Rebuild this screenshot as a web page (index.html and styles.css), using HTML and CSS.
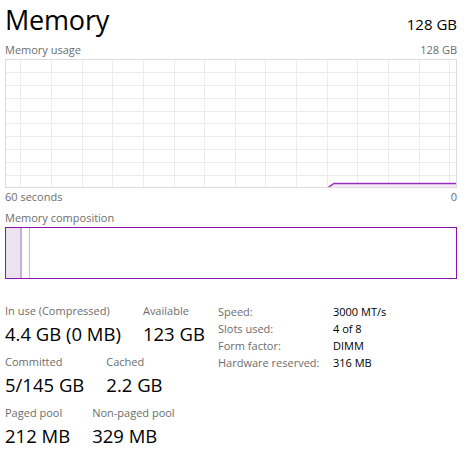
FILE: index.html
```html
<!DOCTYPE html>
<html>
<head>
<meta charset="utf-8">
<link rel="stylesheet" href="styles.css">
</head>
<body>
<div class="page">
  <header class="head">
    <h1 class="title">Memory</h1>
    <div class="total">128 GB</div>
  </header>
  <div class="row-small">
    <span>Memory usage</span>
    <span>128 GB</span>
  </div>
  <svg class="graph" width="452" height="129" viewBox="0 0 452 129">
    <g stroke="#ececec" stroke-width="1">
      <line x1="15.5" y1="0" x2="15.5" y2="129"/>
      <line x1="46.5" y1="0" x2="46.5" y2="129"/>
      <line x1="77.5" y1="0" x2="77.5" y2="129"/>
      <line x1="107.5" y1="0" x2="107.5" y2="129"/>
      <line x1="138.5" y1="0" x2="138.5" y2="129"/>
      <line x1="169.5" y1="0" x2="169.5" y2="129"/>
      <line x1="199.5" y1="0" x2="199.5" y2="129"/>
      <line x1="230.5" y1="0" x2="230.5" y2="129"/>
      <line x1="260.5" y1="0" x2="260.5" y2="129"/>
      <line x1="291.5" y1="0" x2="291.5" y2="129"/>
      <line x1="322.5" y1="0" x2="322.5" y2="129"/>
      <line x1="352.5" y1="0" x2="352.5" y2="129"/>
      <line x1="383.5" y1="0" x2="383.5" y2="129"/>
      <line x1="414.5" y1="0" x2="414.5" y2="129"/>
      <line x1="444.5" y1="0" x2="444.5" y2="129"/>
      <line x1="0" y1="13.5" x2="452" y2="13.5"/>
      <line x1="0" y1="26.5" x2="452" y2="26.5"/>
      <line x1="0" y1="39.5" x2="452" y2="39.5"/>
      <line x1="0" y1="52.5" x2="452" y2="52.5"/>
      <line x1="0" y1="64.5" x2="452" y2="64.5"/>
      <line x1="0" y1="77.5" x2="452" y2="77.5"/>
      <line x1="0" y1="90.5" x2="452" y2="90.5"/>
      <line x1="0" y1="103.5" x2="452" y2="103.5"/>
      <line x1="0" y1="116.5" x2="452" y2="116.5"/>
    </g>
    <polygon points="323,128.5 329,124.5 452,124.5 452,128.5" fill="#f3ebf6"/>
    <polyline points="323,128.5 329,124.5 452,124.5" fill="none" stroke="#9a2cc0" stroke-width="1.5"/>
    <rect x="0.5" y="0.5" width="451" height="128" fill="none" stroke="#dcdcdc"/>
  </svg>
  <div class="row-small axis">
    <span>60 seconds</span>
    <span>0</span>
  </div>
  <div class="row-small comp-label">
    <span>Memory composition</span>
  </div>
  <div class="comp">
    <div class="seg inuse"></div>
    <div class="seg modified"></div>
    <div class="seg rest"></div>
  </div>
  <div class="stats">
    <div class="left">
      <div class="stat-row">
        <div class="stat"><div class="lbl">In use (Compressed)</div><div class="val">4.4 GB (0 MB)</div></div>
        <div class="stat"><div class="lbl">Available</div><div class="val">123 GB</div></div>
      </div>
      <div class="stat-row">
        <div class="stat"><div class="lbl">Committed</div><div class="val">5/145 GB</div></div>
        <div class="stat"><div class="lbl">Cached</div><div class="val">2.2 GB</div></div>
      </div>
      <div class="stat-row">
        <div class="stat"><div class="lbl">Paged pool</div><div class="val">212 MB</div></div>
        <div class="stat"><div class="lbl">Non-paged pool</div><div class="val">329 MB</div></div>
      </div>
    </div>
    <div class="info">
      <span class="k">Speed:</span><span class="v">3000 MT/s</span>
      <span class="k">Slots used:</span><span class="v">4 of 8</span>
      <span class="k">Form factor:</span><span class="v">DIMM</span>
      <span class="k">Hardware reserved:</span><span class="v">316 MB</span>
    </div>
  </div>
</div>
</body>
</html>
```

FILE: styles.css
```css
* { box-sizing: border-box; }
html, body { margin: 0; padding: 0; background: #fff; }
body {
  font-family: "Open Sans", "Noto Sans", "Liberation Sans", sans-serif;
  color: #000;
}
.page {
  width: 470px;
  padding: 0 13px 0 5px;
}
.head {
  display: flex;
  justify-content: space-between;
  align-items: baseline;
  height: 40px;
}
.title {
  margin: 0;
  font-weight: 400;
  font-size: 27px;
  line-height: 40px;
  letter-spacing: -0.2px;
}
.total {
  font-size: 15px;
}
.row-small {
  display: flex;
  justify-content: space-between;
  font-size: 11px;
  line-height: 17px;
  color: #6d6d6d;
  margin-top: 1px;
}
.graph {
  display: block;
  margin-top: 1px;
}
.axis { margin-top: 0; line-height: 18px; }
.comp-label { margin-top: 3px; }
.comp {
  display: flex;
  height: 52px;
  margin-top: 1px;
  border: 1px solid #8b12ae;
}
.seg { height: 100%; }
.inuse {
  width: 16px;
  background: #ece3f1;
  border-right: 2px solid #cbaedb;
}
.modified {
  width: 8px;
  border-right: 1px solid #d7b3e4;
}
.rest { flex: 1; }
.stats {
  display: flex;
  align-items: flex-start;
  gap: 12px;
  margin-top: 24px;
}
.left { width: 201px; }
.stat-row {
  display: flex;
  gap: 22px;
  margin-bottom: 8px;
}
.lbl {
  font-size: 11px;
  line-height: 16px;
  color: #6d6d6d;
}
.val {
  font-size: 18.5px;
  line-height: 24px;
  margin-top: 3px;
}
.info {
  display: grid;
  grid-template-columns: 115px auto;
  align-content: start;
  font-size: 11px;
  line-height: 17px;
}
.info .k { color: #6d6d6d; }
.info .v { color: #000; }
```
